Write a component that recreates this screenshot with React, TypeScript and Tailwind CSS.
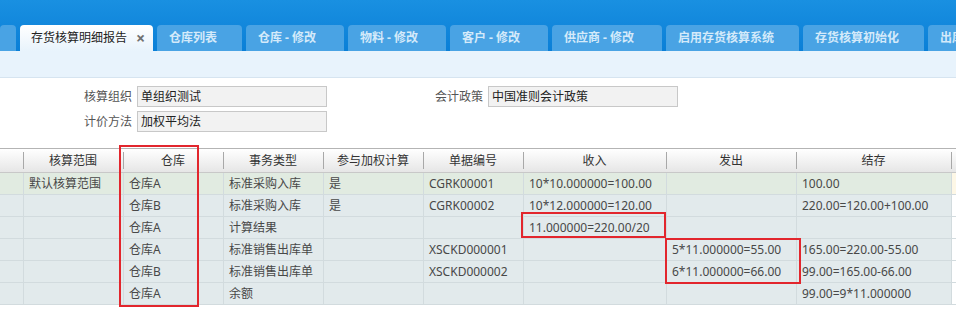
import React from "react";

const font = { fontFamily: '"Noto Sans", "Noto Sans CJK SC", sans-serif' };

const tabs = [
  { t: "", w: "w-[16px]" },
  { t: "存货核算明细报告", w: "w-[133px]", active: true },
  { t: "仓库列表", w: "w-[85px]" },
  { t: "仓库 - 修改", w: "w-[98px]" },
  { t: "物料 - 修改", w: "w-[98px]" },
  { t: "客户 - 修改", w: "w-[98px]" },
  { t: "供应商 - 修改", w: "w-[110px]" },
  { t: "启用存货核算系统", w: "w-[133px]" },
  { t: "存货核算初始化", w: "w-[121px]" },
  { t: "出库", w: "w-[60px]" },
];

const cols = [
  { h: "", w: "w-[23px]" },
  { h: "核算范围", w: "w-[100px]" },
  { h: "仓库", w: "w-[100px]" },
  { h: "事务类型", w: "w-[100px]" },
  { h: "参与加权计算", w: "w-[100px]" },
  { h: "单据编号", w: "w-[100px]" },
  { h: "收入", w: "w-[143px]" },
  { h: "发出", w: "w-[130px]" },
  { h: "结存", w: "w-[155px]" },
  { h: "", w: "w-[10px]" },
];

const rows: string[][] = [
  ["", "默认核算范围", "仓库A", "标准采购入库", "是", "CGRK00001", "10*10.000000=100.00", "", "100.00", ""],
  ["", "", "仓库B", "标准采购入库", "是", "CGRK00002", "10*12.000000=120.00", "", "220.00=120.00+100.00", ""],
  ["", "", "仓库A", "计算结果", "", "", "11.000000=220.00/20", "", "", ""],
  ["", "", "仓库A", "标准销售出库单", "", "XSCKD000001", "", "5*11.000000=55.00", "165.00=220.00-55.00", ""],
  ["", "", "仓库B", "标准销售出库单", "", "XSCKD000002", "", "6*11.000000=66.00", "99.00=165.00-66.00", ""],
  ["", "", "仓库A", "余额", "", "", "", "", "99.00=9*11.000000", ""],
];

export default function App() {
  return (
    <div className="w-[956px] h-[311px] overflow-hidden bg-white relative text-[12px]" style={font}>
      {/* top bar */}
      <div className="h-[51px] bg-gradient-to-b from-[#1990e1] to-[#0a7fd7] flex items-end overflow-hidden">
        <div className="flex gap-[4px] h-[26px] whitespace-nowrap">
          {tabs.map((tb, i) =>
            tb.active ? (
              <div
                key={i}
                className={`${tb.w} shrink-0 rounded-t-[4px] bg-gradient-to-b from-white to-[#e8f3fc] flex items-center pl-[11px] text-[#222]`}
              >
                <span>{tb.t}</span>
                <span className="ml-[9px] text-[#707070] text-[16px] font-bold leading-none">×</span>
              </div>
            ) : (
              <div
                key={i}
                className={`${tb.w} shrink-0 rounded-t-[4px] bg-[#49a3e4] flex items-center pl-[12px] text-[#d4eafa] font-bold`}
              >
                {tb.t}
              </div>
            )
          )}
        </div>
      </div>
      <div className="h-[27px] bg-[#e8f3fc] border-b border-[#d6e4f0]" />

      {/* form */}
      <div className="pt-[8px] text-[#555]">
        <div className="flex items-center h-[21px]">
          <div className="w-[132px] text-right">核算组织</div>
          <div className="ml-[5px] w-[190px] h-[21px] bg-[#f2f2f2] border border-[#c8c8c8] pl-[3px] flex items-center text-[#222]">单组织测试</div>
          <div className="w-[156px] text-right">会计政策</div>
          <div className="ml-[5px] w-[190px] h-[21px] bg-[#f2f2f2] border border-[#c8c8c8] pl-[3px] flex items-center text-[#222]">中国准则会计政策</div>
        </div>
        <div className="flex items-center h-[21px] mt-[4px]">
          <div className="w-[132px] text-right">计价方法</div>
          <div className="ml-[5px] w-[190px] h-[21px] bg-[#f2f2f2] border border-[#c8c8c8] pl-[3px] flex items-center text-[#222]">加权平均法</div>
        </div>
      </div>

      {/* table */}
      <div className="mt-[16px] border-t border-[#b4b4b4]">
        <div className="flex h-[24px] bg-gradient-to-b from-white to-[#e6e6e6] border-b border-[#c8c8c8] text-[#333]">
          {cols.map((c, i) => (
            <div key={i} className={`${c.w} shrink-0 relative flex items-center justify-center`}>
              {i > 0 && <div className="absolute left-0 top-[3px] bottom-[3px] w-px bg-[#a8a8a8]" />}
              {c.h}
            </div>
          ))}
        </div>
        {rows.map((r, ri) => (
          <div
            key={ri}
            className={`flex h-[22px] border-b border-[#d2dbde] text-[#484848] ${ri === 0 ? "bg-[#e1ebe1]" : "bg-[#e2eaec]"}`}
          >
            {r.map((v, ci) => (
              <div
                key={ci}
                className={`${cols[ci].w} shrink-0 flex items-center pl-[5px] whitespace-nowrap ${ci > 0 ? "border-l border-[#d2dbde]" : ""} ${ci === 9 ? (ri === 0 ? "bg-[#fdf7e6]" : "bg-white") : ""}`}
              >
                {v}
              </div>
            ))}
          </div>
        ))}
      </div>

      {/* red annotation boxes */}
      <div className="absolute left-[119px] top-[145px] w-[80px] h-[162px] border-2 border-[#e2262d]" />
      <div className="absolute left-[521px] top-[212px] w-[145px] h-[26px] border-2 border-[#e2262d]" />
      <div className="absolute left-[665px] top-[238px] w-[136px] h-[46px] border-2 border-[#e2262d]" />
    </div>
  );
}
